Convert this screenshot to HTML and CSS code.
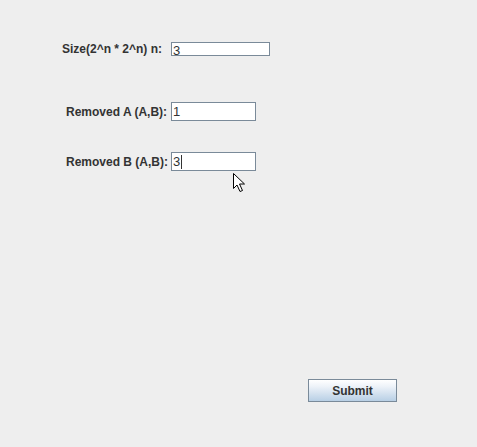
FILE: index.html
```html
<!DOCTYPE html>
<html>
<head>
<meta charset="utf-8">
<link rel="stylesheet" href="styles.css">
</head>
<body>
<div class="frame">
  <div class="row row-size">
    <span class="label">Size(2^n * 2^n) n:</span>
    <div class="field field-wide"><span class="val">3</span></div>
  </div>
  <div class="row row-a">
    <span class="label">Removed A (A,B):</span>
    <div class="field field-tall"><span class="val">1</span></div>
  </div>
  <div class="row row-b">
    <span class="label">Removed B (A,B):</span>
    <div class="field field-tall"><span class="val">3</span><span class="caret"></span></div>
  </div>
  <div class="actions">
    <button class="submit">Submit</button>
  </div>
  <svg class="cursor" width="14" height="20" viewBox="0 0 14 20">
    <path d="M0.5 0.5 L0.5 15.5 L4 12 L7 18.5 L9.5 17.5 L6.5 11 L11.5 11 Z" fill="#fff" stroke="#000" stroke-width="1" stroke-linejoin="miter"/>
  </svg>
</div>
</body>
</html>
```
FILE: styles.css
```css
html, body {
  margin: 0;
  padding: 0;
  background: #eeeeee;
}
.frame {
  position: relative;
  width: 477px;
  height: 447px;
  padding-top: 42px;
  box-sizing: border-box;
  font-family: "Liberation Sans", Arial, sans-serif;
  font-size: 12px;
  color: #333333;
}
.row {
  display: flex;
  align-items: center;
}
.label {
  font-weight: bold;
  white-space: nowrap;
}
.row-size {
  height: 14px;
  padding-left: 62px;
}
.row-size .label { width: 109px; }
.row-a {
  margin-top: 46px;
  height: 19px;
  padding-left: 66px;
}
.row-b {
  margin-top: 31px;
  height: 19px;
  padding-left: 66px;
}
.row-a .label, .row-b .label { width: 105px; }
.field {
  box-sizing: border-box;
  background: #ffffff;
  border: 1px solid #7a8a99;
  display: flex;
  align-items: center;
  padding-left: 1px;
  overflow: hidden;
}
.field-wide { width: 99px; height: 14px; }
.field-wide .val { margin-top: 2px; }
.field-tall { width: 85px; height: 19px; }
.val {
  font-size: 13px;
  line-height: 13px;
  color: #333333;
}
.caret {
  display: inline-block;
  width: 1px;
  height: 14px;
  background: #333;
  margin-left: 1px;
}
.actions {
  margin-top: 208px;
  padding-left: 308px;
}
.submit {
  width: 89px;
  height: 23px;
  margin: 0;
  padding: 0;
  border: 1px solid #7a8a99;
  background: linear-gradient(#ffffff 0%, #eef3f9 30%, #b8cfe5 100%);
  font-family: "Liberation Sans", Arial, sans-serif;
  font-weight: bold;
  font-size: 12px;
  color: #333333;
}
.cursor {
  position: absolute;
  left: 233px;
  top: 173px;
}
```
